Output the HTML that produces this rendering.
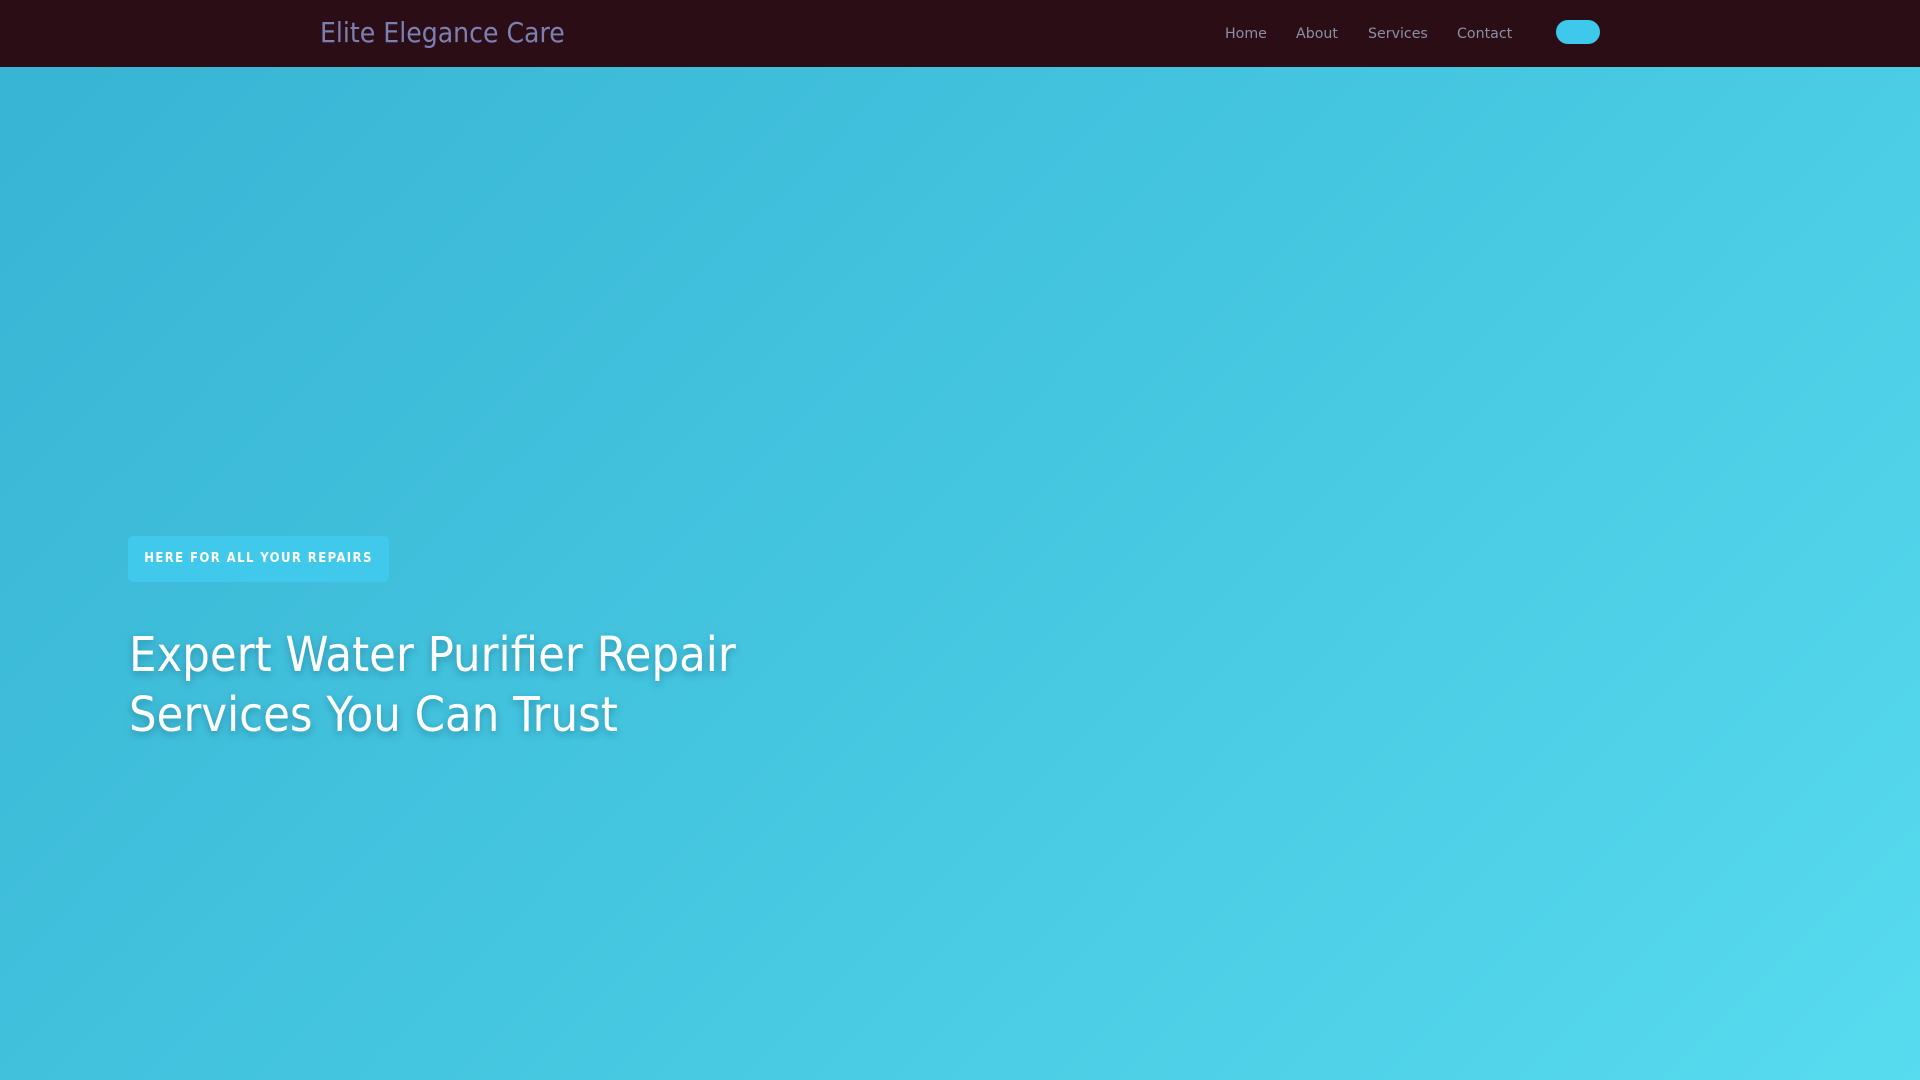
<!DOCTYPE html>
<html><head><meta charset="utf-8"><style>
*{margin:0;padding:0;box-sizing:border-box}
body{width:1920px;height:1080px;overflow:hidden;font-family:"DejaVu Sans","Liberation Sans",sans-serif;background:linear-gradient(135deg,#37b3d3 0%,#45c6e0 50%,#57dbef 100%)}
header{position:absolute;top:0;left:0;width:1920px;height:67px;background:#2b0e15;}
.logo{position:absolute;left:320px;top:16px;font-size:28px;color:#7b80b3;font-family:"DejaVu Sans Condensed","DejaVu Sans",sans-serif}
nav a{position:absolute;top:26px;font-size:14.2px;color:#8a8fa6;text-decoration:none}
.btn{position:absolute;left:1556px;top:20px;width:44px;height:24px;border-radius:12px;background:#3ec9ec}
.badge{position:absolute;left:128px;top:536px;width:261px;height:46px;background:#41c9ec;border-radius:6px;color:#fff;font-size:13px;font-weight:bold;letter-spacing:1.4px;line-height:46px;text-align:center;font-family:"DejaVu Sans Condensed","DejaVu Sans",sans-serif}
h1{position:absolute;left:129px;top:625px;font-size:48.4px;font-weight:normal;line-height:60px;color:#fff;text-shadow:0 3px 8px rgba(0,60,90,.35);font-family:"DejaVu Sans Condensed","DejaVu Sans",sans-serif}
</style></head><body>
<header><div class="logo">Elite Elegance Care</div>
<nav><a style="left:1225px">Home</a><a style="left:1296px">About</a><a style="left:1368px">Services</a><a style="left:1457px">Contact</a></nav>
<div class="btn"></div></header>
<div class="badge">HERE FOR ALL YOUR REPAIRS</div>
<h1>Expert Water Purifier Repair<br>Services You Can Trust</h1>
</body></html>
